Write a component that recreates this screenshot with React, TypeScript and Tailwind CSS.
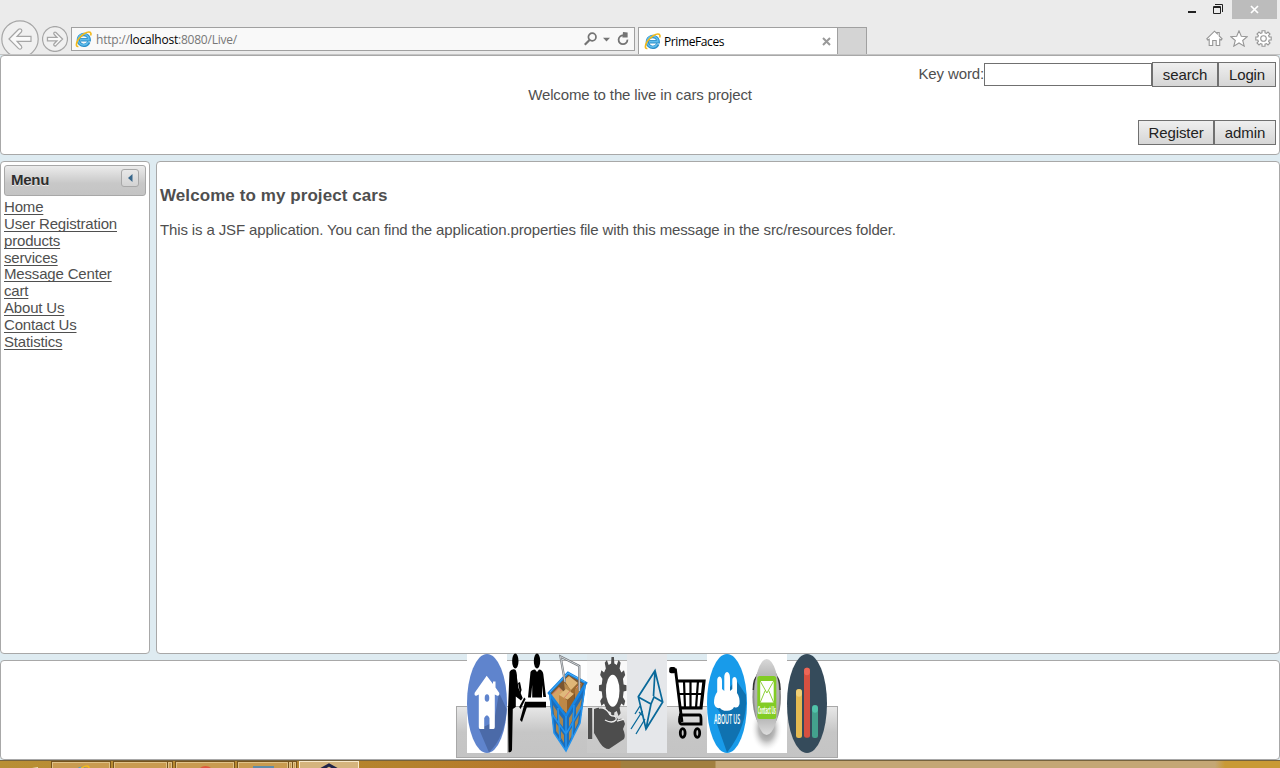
import React from "react";

const links = ["Home", "User Registration", "products", "services", "Message Center", "cart", "About Us", "Contact Us", "Statistics"];

function IeLogo({ className = "" }: { className?: string }) {
  return (
    <svg width="17" height="17" viewBox="0 0 17 17" className={className}>
      <path d="M13.8 11A5.4 5.4 0 1 1 14.2 8.8H5.5" fill="none" stroke="#2b8fc9" strokeWidth="3.4" />
      <path d="M13.4 10.8A5.4 5.4 0 1 1 13.9 8.6H5.5" fill="none" stroke="#5fbcec" strokeWidth="1.6" />
      <path d="M3.4 15.4C.8 16.2.6 12.5 3.4 8.3 6.6 3.6 12.6-.2 15.2 1.3c1 .7.9 2 .4 3.2" fill="none" stroke="#f3b91b" strokeWidth="1.6" />
    </svg>
  );
}

function NavArrow({ left, className }: { left?: boolean; className: string }) {
  return (
    <svg viewBox="0 0 38 38" className={className}>
      <circle cx="19" cy="19" r="18.2" fill="#f0f0f0" stroke="#a6a6a6" strokeWidth={left ? 1.2 : 1.8} />
      <path
        transform={left ? undefined : "rotate(180 19 19)"}
        d="M8 19 17.6 9.3Q19 8.2 20.4 9.4 21.4 10.7 20.3 12L16.1 16.4H30V21.4H16.1L20.4 26Q21.4 27.3 20.2 28.6 19 29.7 17.6 28.6Z"
        fill="#fafafa" stroke="#a6a6a6" strokeWidth={left ? 1.2 : 1.9}
      />
    </svg>
  );
}

function Btn({ children, className }: { children: React.ReactNode; className: string }) {
  return (
    <button className={`${className} h-[25px] shrink-0 border border-[#707070] bg-linear-to-b from-[#efefef] to-[#d6d6d6] text-center text-[15px] leading-[22px] tracking-[-0.1px] text-[#222]`}>
      {children}
    </button>
  );
}

function Panel({ children, className }: { children?: React.ReactNode; className: string }) {
  return <div className={`${className} rounded-[4px] border border-[#a8a8a8] bg-white`}>{children}</div>;
}

function Item({ children, className = "" }: { children: React.ReactNode; className?: string }) {
  return <svg width="40" height="99" viewBox="0 0 40 99" className={`shrink-0 overflow-visible ${className}`}>{children}</svg>;
}

// Outline of a toothed wheel, stretched vertically like the rest of the dock icons.
function gearPath(cx: number, cy: number, rx: number, ry: number, teeth: number) {
  const pts: string[] = [];
  for (let i = 0; i < teeth; i++) {
    [[-0.28, 0.8], [-0.17, 1], [0.17, 1], [0.28, 0.8]].forEach(([o, r]) => {
      const a = ((i + o) / teeth) * Math.PI * 2 - Math.PI / 2;
      pts.push(`${(cx + Math.cos(a) * rx * r).toFixed(2)} ${(cy + Math.sin(a) * ry * r).toFixed(2)}`);
    });
  }
  return `M${pts.join("L")}Z`;
}

function Dock() {
  return (
    <div className="flex h-[52px] w-[382px] items-end border border-[#a8a8a8] bg-linear-to-b from-[#e7e7e7] via-[#c6c6c6] via-50% to-[#c4c4c4] pb-[4px] pl-[10px]">
      <Item className="bg-white">
        <ellipse cx="20" cy="49.5" rx="20" ry="49.5" fill="#5f84cd" />
        <path d="M32 38.7 39.7 55Q38 83 22 98.4L12 75 27 68Z" fill="#4b6aa8" />
        <path d="M19.7 21.7 26 30V27.5H28.5V33.5L32.3 39Q32.8 42 30.3 41.7L27.8 40.5V73Q27.8 75 26.5 75H22.5V64Q20 58.5 17.2 64V75H13Q11.8 75 11.8 73V40.5L9.3 41.7Q7 42 7.7 38.7Z" fill="white" />
        <ellipse cx="20" cy="44" rx="2.3" ry="3.8" fill="#5f84cd" />
      </Item>
      <Item>
        <g fill="#000">
          <ellipse cx="8.3" cy="7" rx="3.2" ry="7.5" />
          <path d="M2.5 18Q4 14.5 8 15.5 10 17 10 24L11.5 34 15.7 44 14 46.5 8.8 42.5V53L5.8 55 5 96Q4 99 1.5 98L1 55Z" />
          <path d="m11 29 2-1 1.6 8-1.3 4Z" />
          <ellipse cx="30" cy="7" rx="3.2" ry="7.5" />
          <path d="M23.5 18Q24.5 15.5 28 15.5L30 18 32 15.5Q35.5 15.5 36.3 20L39 43H36.3L35 31V43.5H25.2V31L24 43.5H21Z" />
          <path d="M18 47.7H39V53.5H19.8L15 68 13 66Z" />
          <path d="M17.2 43.5 18.6 45 13.6 55 12.2 53Z" />
        </g>
      </Item>
      <Item>
        <path d="M2 39 21 19 39 29 33 69 19 97 7 79Z" fill="#7b5630" />
        <path d="m4 41 8-8 7 7-3 16-3 3z" fill="#d3a464" />
        <path d="m17 26 5-4 9 7-7 8z" fill="#dfb677" />
        <path d="m17 28 7 8v6l-6-5z" fill="#b98b4d" />
        <path d="m24 36 7-7v6l-6 8z" fill="#99692f" />
        <path d="m12 41 7-6 8 5-6 6z" fill="#e0b97c" />
        <path d="m12 41 8 5v14l-8-9z" fill="#bd8847" />
        <path d="m20 46 7-6v9l-7 11z" fill="#916029" />
        <path d="m28 35 7-6-3 12-4 5z" fill="#b47e40" />
        <path d="m5 41 7-7 2 3M17 44l6-7M29 34l5-5" stroke="#db7f66" fill="none" />
        <path d="M2 39 19 62V97L7 79ZM39 29 19 62V97L33 69Z" fill="#1d6db9" />
        <path d="m6 51 4 6v9l-3-5zM12 60l4 5v8l-4-5zM22 64l4-6-1 9-3 6zM29 54l6-10-2 12-4 7zM9 69l3 4v8l-3-4zM14 77l3 4v8l-3-5zM22 78l4-6-1 9-3 6zM28 68l4-7-1 8-3 6z" fill="#a98650" />
        <path d="M2 39 21 19 39 29 19 62Z" fill="none" stroke="#1685e3" strokeWidth="2.6" />
        <path d="M3 38 21 19 38 28" fill="none" stroke="#5ebcfa" strokeWidth=".8" />
        <path d="M3 41 7 79 19 97 33 69 38 32M11 54l2 32M19 62v35M27 51l-2 34M5 60l14 20 16-28" fill="none" stroke="#2494ef" strokeWidth="1.5" />
        <path d="M18 28 13.5 2.5 32.3 12V37" fill="none" stroke="#73777b" strokeWidth="2.2" />
        <path d="M18 28 13.5 2.5 32.3 12V37" fill="none" stroke="#d5d9dc" strokeWidth=".9" />
      </Item>
      <Item>
        <rect width="40" height="99" fill="#ddd" opacity=".18" />
        <path d={gearPath(25.7, 34, 13.8, 31, 12)} fill="#4d4d4d" />
        <ellipse cx="25.7" cy="36.8" rx="6.8" ry="16" fill="white" />
        <path d="M7 55Q15 51 20 57L25 63Q30 61 31 66 36 62 38 70L36 75Q39 82 37 85L31 89 22 95Q17 95 13 89L7 79Z" fill="#4d4d4d" />
        <path d="M12 54Q18 53 22 59 23 62 27 62 30 63 29 66 25 70 18 66M30 67 37 65" fill="none" stroke="#eee" strokeWidth="1.3" />
        <rect x="1" y="54" width="4.2" height="31" fill="#4d4d4d" />
      </Item>
      <Item className="bg-[#e5e7ea]">
        <g fill="none" stroke="#09699a" strokeWidth="1.7">
          <path d="M28 16.7 35.7 48 19 75 11.3 42.7ZM11.3 43 24 50 27 43 35.7 48M28 16.7 26.5 42M24 50 19 75" />
          <path d="M13 52 8 60M15.5 57 4 75M18 65 9 80M12 58l4 4" strokeWidth="1.3" />
        </g>
      </Item>
      <Item>
        <g fill="none" stroke="#000">
          <path d="M4 16H8.5L15 68" strokeWidth="2.8" />
          <path d="M9 27H37L34 54H12" strokeWidth="3.2" />
          <path d="M11 40H36M17 27 18 54M23.5 27V54M31 27 29 54" strokeWidth="2.2" />
          <path d="M12 61H32.5Q34 61 34 65V70H14Q11.5 69 13 62" strokeWidth="2.8" />
          <ellipse cx="15.7" cy="79" rx="2.4" ry="4.3" strokeWidth="2.8" />
          <ellipse cx="30.3" cy="79" rx="2.4" ry="4.3" strokeWidth="2.8" />
        </g>
        <rect x="2.2" y="13" width="6.5" height="6.2" rx="2" />
      </Item>
      <Item className="bg-white">
        <ellipse cx="20" cy="49.5" rx="20" ry="49.5" fill="#189bea" />
        <path d="M29 26 39 41Q41 72 20 98.6L10 70 14 60 8 51Z" fill="#1072b0" />
        <g fill="white">
          <path d="M10.2 38V27Q10 23 12.5 22.5 15 23 15 27V35L17.3 37V22Q18 18 20.3 18 23 19 23 24V37L25.3 35V27Q25 23 28 23 30 24 30 28V39Q33 43 32.5 50 31 55 27 53 25 57 20 56.8 15 57 13 54 8 55 7 49 7 42 10.2 38Z" />
          <text x="0" y="0" transform="translate(7 70) scale(1 1.45)" fontFamily="Open Sans, sans-serif" fontWeight="600" fontSize="9.3" textLength="26" lengthAdjust="spacingAndGlyphs">ABOUT US</text>
        </g>
      </Item>
      <Item className="bg-white">
        <defs>
          <radialGradient id="shade"><stop stopColor="#888" /><stop offset=".5" stopColor="#bbb" /><stop offset="1" stopColor="#fff" stopOpacity="0" /></radialGradient>
          <linearGradient id="silver" x2="0" y2="1"><stop stopColor="#d8d8d8" /><stop offset=".2" stopColor="#bbb" /><stop offset=".7" stopColor="#aaa" /><stop offset="1" stopColor="#ddd" /></linearGradient>
        </defs>
        <ellipse cx="19.7" cy="75" rx="16" ry="23" fill="url(#shade)" />
        <ellipse cx="19.7" cy="43" rx="14.3" ry="32" fill="#8d8d8d" />
        <path d="M11 22Q6.3 24 6.3 36M28.5 22Q33 24 33 36" fill="none" stroke="#333" strokeWidth="1.5" />
        <ellipse cx="19.7" cy="43" rx="12.4" ry="38" fill="url(#silver)" />
        <rect x="10.3" y="22" width="19" height="43" rx="2.5" fill="#82cc24" />
        <path d="M13.2 27H26.7V48.5H13.2Z" fill="white" />
        <path d="m13.2 27 6.7 12 6.8-12M13.2 48.5l5-12M26.7 48.5l-5-12" fill="none" stroke="#82cc24" strokeWidth=".9" />
        <text x="0" y="0" transform="translate(10.7 59.5) scale(1 2)" fill="white" fontFamily="Open Sans, sans-serif" fontWeight="700" fontSize="5" textLength="18" lengthAdjust="spacingAndGlyphs">Contact Us</text>
      </Item>
      <Item>
        <ellipse cx="20" cy="49.5" rx="20" ry="49.5" fill="#354b5b" />
        <rect x="9" y="35" width="6" height="49" rx="2.5" fill="#e5ba51" />
        <ellipse cx="12" cy="39" rx="3" ry="3.8" fill="#f0cf77" />
        <rect x="17" y="13.7" width="6" height="70" rx="2.5" fill="#d75040" />
        <ellipse cx="20" cy="17.5" rx="3" ry="3.8" fill="#ed6657" />
        <rect x="25" y="51" width="6" height="33" rx="2.5" fill="#43a18d" />
        <ellipse cx="28" cy="55" rx="3" ry="3.8" fill="#51c3aa" />
      </Item>
    </div>
  );
}

function Task({ className, children }: { className: string; children?: React.ReactNode }) {
  return <div className={`${className} flex h-[20px] shrink-0 justify-center border border-[#76531c] bg-[#c99b50] shadow-[inset_0_0_0_1px_#e0c287]`}>{children}</div>;
}

export default function App() {
  return (
    <div className="flex h-[768px] w-[1280px] flex-col overflow-hidden bg-[#deebf1] font-['Liberation_Sans',Arial,sans-serif] text-[15px] tracking-[-0.13px] text-[#4f4f4f]">
      <header className="flex h-[55px] shrink-0 flex-col border-b border-[#c4c4c4] bg-[#ebebeb]">
        <div className="flex h-[19px] shrink-0 justify-end pr-[3px]">
          <svg width="44" height="19" viewBox="0 0 44 19" className="shrink-0">
            <path d="M0 11h8v2H0z" fill="#222" />
            <path d="M25.5 6.5h7v7h-7zM25 7.5h8M27 4.5h7.5V12" fill="none" stroke="#222" />
          </svg>
          <div className="flex w-[45px] items-center justify-center bg-[#bcbcbc]">
            <svg width="9" height="9" viewBox="0 0 9 9"><path d="m1 1 7 7M8 1 1 8" stroke="white" strokeWidth="1.7" /></svg>
          </div>
        </div>
        <div className="flex h-[35px] shrink-0">
          <div className="flex h-[35px] w-[71px] items-start overflow-hidden">
            <NavArrow left className="ml-px mt-px h-[38px] w-[38px] shrink-0" />
            <NavArrow className="ml-[3px] mt-[7px] h-[26px] w-[26px] shrink-0" />
          </div>
          <div className="mt-[8px] flex h-[24px] w-[564px] items-center border border-[#a0a0a0] bg-[#f9f9f9] pl-[3px]">
            <IeLogo />
            <span className="ml-[4px] w-[488px] whitespace-nowrap pt-px font-['Open_Sans',sans-serif] text-[12px] tracking-[-0.22px] text-[#777]">
              http://<span className="text-black">localhost</span>:8080/Live/
            </span>
            <svg width="48" height="16" viewBox="0 0 48 16" fill="none" stroke="#747474">
              <circle cx="8.2" cy="6" r="3.8" strokeWidth="1.7" /><path d="M5.5 9 .8 13.7" strokeWidth="2.2" />
              <path d="M19 6.8h7l-3.5 3.7z" fill="#747474" stroke="none" />
              <path d="M39.5 4.4A4.4 4.4 0 1 0 43.4 8.6" strokeWidth="1.8" />
              <path d="M39 1 43.6 1.5V6.5H38.4z" fill="#747474" stroke="none" />
            </svg>
          </div>
          <div className="ml-[3px] mt-[8px] flex h-[27px] w-[200px] items-center border border-b-0 border-[#a0a0a0] bg-white pl-[5px]">
            <IeLogo />
            <span className="ml-[3px] w-[158px] pt-px font-['Open_Sans',sans-serif] text-[12px] tracking-[-0.4px] text-black">PrimeFaces</span>
            <svg width="9" height="9" viewBox="0 0 9 9"><path d="m1 1 7 7M8 1 1 8" stroke="#999" strokeWidth="2" /></svg>
          </div>
          <div className="mt-[8px] h-[27px] w-[29px] border border-b-0 border-l-0 border-[#a0a0a0] bg-[#d4d4d4]" />
          <div className="ml-auto mr-[8px] mt-[11px] flex gap-[7px]">
            <svg width="17" height="17" viewBox="0 0 17 17" fill="white" stroke="#969696" strokeWidth="1.1"><path d="M3.2 9.2 1.8 10 .8 8.8 8.5 1.2 11.2 3.8V2.5h2v3.4l2.9 2.9L15.2 10l-1.5-.8v6.3h-3.5v-5H6.7v5H3.2z" /></svg>
            <svg width="18" height="17" viewBox="0 0 18 17" fill="white" stroke="#969696" strokeWidth="1.1"><path d="m9 .9 2.3 5.3 5.9.5-4.5 3.8 1.5 5.6L9 13l-5.2 3.1 1.5-5.6L.8 6.7l5.9-.5z" /></svg>
            <svg width="17" height="17" viewBox="0 0 17 17" fill="white" stroke="#969696" strokeWidth="1.1"><path d="M7 .8h3v2l1.5.6L13 2l2 2-1.4 1.5.6 1.5h2v3h-2l-.6 1.5L15 13l-2 2-1.5-1.4-1.5.6v2H7v-2l-1.5-.6L4 15l-2-2 1.4-1.5L2.8 10h-2V7h2l.6-1.5L2 4l2-2 1.5 1.4L7 2.8z" /><circle cx="8.5" cy="8.5" r="2.8" /></svg>
          </div>
        </div>
      </header>

      <main className="flex h-[705px] shrink-0 flex-col gap-[6px]">
        <Panel className="grid h-[100px] shrink-0 grid-cols-[1fr_224px_1fr] pr-[3px]">
          <div />
          <div className="-mr-[3px] pt-[30px] text-center whitespace-nowrap leading-[18px]">Welcome to the live in cars project</div>
          <div className="flex flex-col items-end">
            <div className="flex pt-[6px]">
              <label className="whitespace-nowrap pt-[3px] leading-[18px]">Key word:</label>
              <input aria-label="Key word" className="mt-px h-[23px] w-[168px] border border-[#707070] bg-white" />
              <Btn className="w-[66px]">search</Btn>
              <Btn className="w-[58px]">Login</Btn>
            </div>
            <div className="mt-[33px] flex">
              <Btn className="w-[76px]">Register</Btn>
              <Btn className="w-[62px]">admin</Btn>
            </div>
          </div>
        </Panel>

        <div className="flex h-[493px] shrink-0 gap-[6px]">
          <Panel className="w-[150px] shrink-0 p-[3px]">
            <div className="flex h-[31px] justify-between rounded-[3px] border border-[#a8a8a8] bg-linear-to-b from-[#ececec] via-[#c8c8c8] via-60% to-[#c4c4c4] pl-[6px] pr-[6px] pt-[3px]">
              <span className="pt-[2px] font-bold leading-[18px] tracking-[-0.25px] text-[#2e2e2e] [text-shadow:0_1px_0_rgba(255,255,255,0.7)]">Menu</span>
              <div className="flex h-[18px] w-[18px] items-center justify-center rounded-[3px] border border-[#a8a8a8] bg-linear-to-b from-[#e8e8e8] to-[#d3d3d3]">
                <svg width="5" height="8" viewBox="0 0 5 8"><path d="M4.5 0v8L0 4z" fill="#38678b" /></svg>
              </div>
            </div>
            <nav className="mt-[2px] flex flex-col items-start">
              {links.map((l) => (
                <a key={l} className="h-[16.87px] whitespace-nowrap leading-[17px] tracking-[-0.17px] underline decoration-1 underline-offset-2 [text-decoration-skip-ink:none]">{l}</a>
              ))}
            </nav>
          </Panel>
          <Panel className="grow pl-[3px]">
            <h3 className="mt-[24px] text-[17px] font-bold leading-[20px] tracking-[0.08px]">Welcome to my project cars</h3>
            <p className="mt-[15px] leading-[18px]">This is a JSF application. You can find the application.properties file with this message in the src/resources folder.</p>
          </Panel>
        </div>

        <Panel className="h-[100px] shrink-0 pl-[455px] pt-[45px]">
          <Dock />
        </Panel>
      </main>

      <footer className="flex h-[8px] shrink-0 items-start overflow-hidden border-t border-[#76633f] bg-[linear-gradient(90deg,#b98f35_0,#b5822c_400px,#b6752b_560px,#b6752b_620px,#a17f3f_621px,#a17f3f_715px,#c4a775_716px,#c4a775_1215px,#c99a36_1225px,#c99a36_1280px)]">
        <svg width="51" height="8" className="shrink-0"><path d="m20 9 18-3v3" fill="#f1dfb8" /></svg>
        <Task className="w-[60px]"><IeLogo className="mt-[3px]" /></Task>
        <Task className="ml-[2px] w-[55px]" />
        <Task className="-ml-px w-[6px]" />
        <Task className="ml-[2px] w-[60px]"><div className="mt-[4px] h-[17px] w-[17px] rounded-full bg-[#e0583d]" /></Task>
        <Task className="ml-[2px] w-[52px]"><div className="mt-[4px] h-4 w-[21px] bg-[#5e8ca9]" /></Task>
        <Task className="-ml-px w-[5px]" />
        <Task className="-ml-px w-[5px]" />
        <div className="ml-[2px] flex h-[20px] w-[60px] shrink-0 justify-center border border-[#f8e9ca] bg-[#d5b47d]">
          <svg width="26" height="10" viewBox="0 0 26 10"><path d="m2 9 11-6 11 6" fill="none" stroke="#202348" strokeWidth="3" /></svg>
        </div>
      </footer>
    </div>
  );
}
